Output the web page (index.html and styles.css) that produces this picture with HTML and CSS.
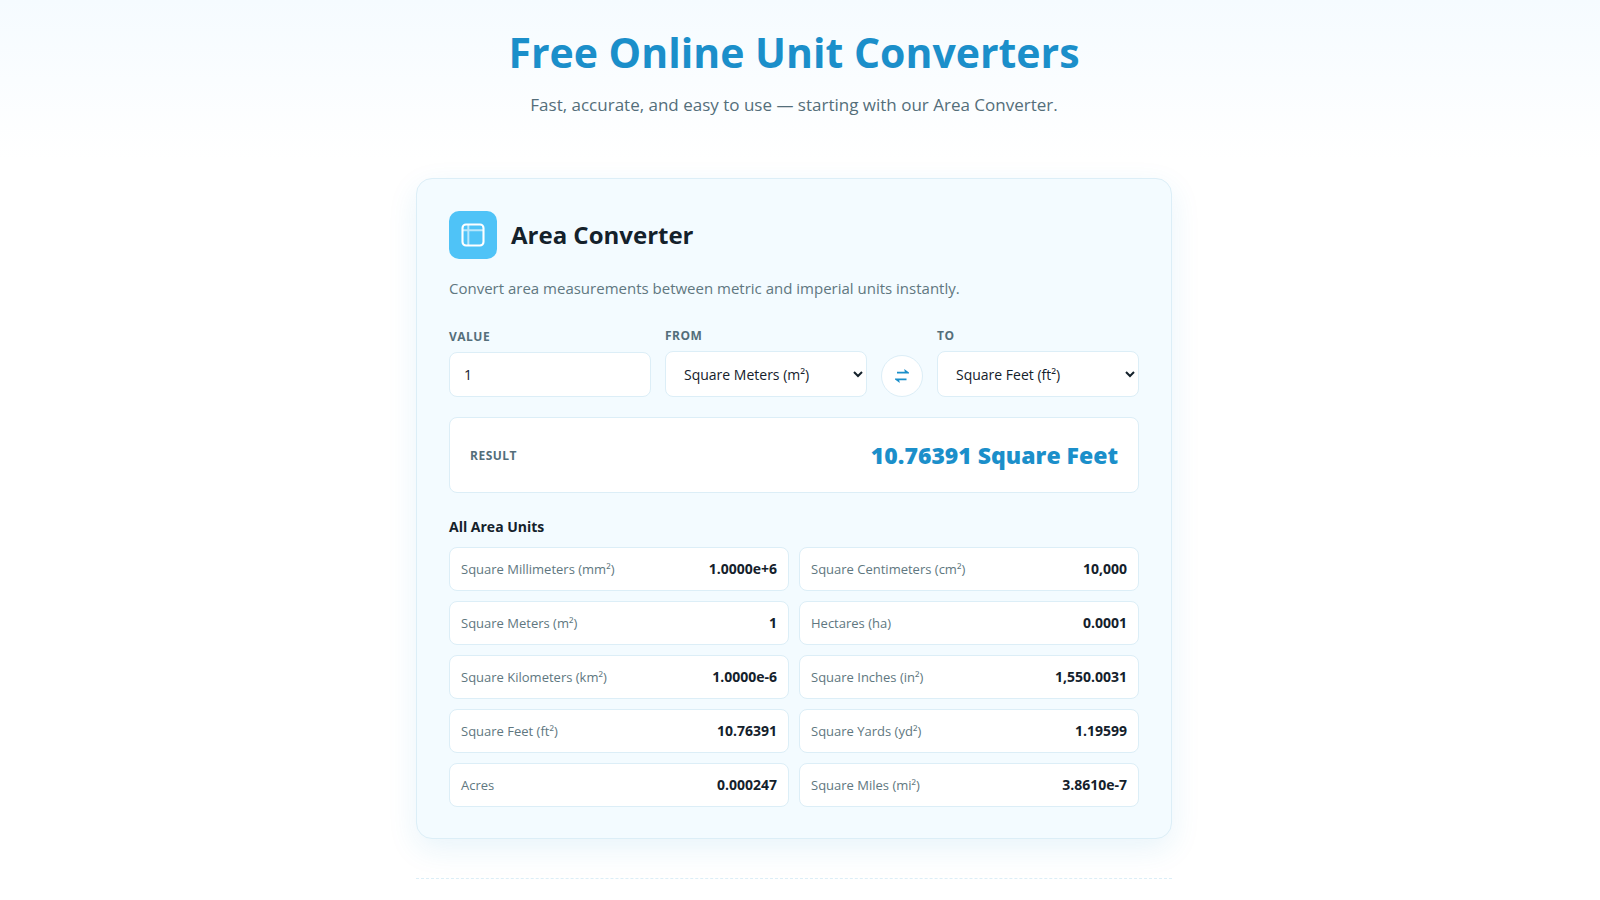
FILE: index.html
```html
<!DOCTYPE html>
<html lang="en">
<head>
<meta charset="utf-8">
<meta name="viewport" content="width=device-width, initial-scale=1">
<title>Free Online Unit Converters</title>
<link rel="stylesheet" href="styles.css">
</head>
<body>
<header class="hero">
  <h1 class="hero-title">Free Online Unit Converters</h1>
  <p class="hero-text">Fast, accurate, and easy to use — starting with our Area Converter.</p>
</header>
<main class="page">
  <section class="card">
    <div class="card-head">
      <span class="card-icon">
        <svg width="28" height="28" viewBox="0 0 24 24" fill="none" stroke="#fff" stroke-width="1.8" aria-hidden="true">
          <path d="M3 8h18M8 3v18" stroke-width="1.7" opacity=".6"/>
          <rect x="3" y="3" width="18" height="18" rx="3"/>
        </svg>
      </span>
      <h2 class="card-title">Area Converter</h2>
    </div>
    <p class="card-text">Convert area measurements between metric and imperial units instantly.</p>
    <form class="fields">
      <div class="field">
        <label class="label" for="value">Value</label>
        <input class="control control-input" id="value" type="text" inputmode="decimal" value="1">
      </div>
      <div class="field">
        <label class="label" for="from">From</label>
        <select class="control control-select" id="from"><option>Square Meters (m²)</option></select>
      </div>
      <button class="swap" type="button" aria-label="Swap units">
        <svg width="14" height="16" viewBox="0 0 14 16" fill="#1b8fca" aria-hidden="true">
          <path d="M2 3.8h7.8L9.2 1l4.8 3.4v1H2z"/>
          <path d="M11.5 12.2H4.2l.6 2.8L0 11.6v-1h11.5z"/>
        </svg>
      </button>
      <div class="field">
        <label class="label" for="to">To</label>
        <select class="control control-select" id="to"><option>Square Feet (ft²)</option></select>
      </div>
    </form>
    <div class="result">
      <span class="label">Result</span>
      <output class="result-value" for="value from to">10.76391 Square Feet</output>
    </div>
    <h3 class="list-title">All Area Units</h3>
    <dl class="units">
      <div class="unit"><dt>Square Millimeters (mm²)</dt><dd>1.0000e+6</dd></div>
      <div class="unit"><dt>Square Centimeters (cm²)</dt><dd>10,000</dd></div>
      <div class="unit"><dt>Square Meters (m²)</dt><dd>1</dd></div>
      <div class="unit"><dt>Hectares (ha)</dt><dd>0.0001</dd></div>
      <div class="unit"><dt>Square Kilometers (km²)</dt><dd>1.0000e-6</dd></div>
      <div class="unit"><dt>Square Inches (in²)</dt><dd>1,550.0031</dd></div>
      <div class="unit"><dt>Square Feet (ft²)</dt><dd>10.76391</dd></div>
      <div class="unit"><dt>Square Yards (yd²)</dt><dd>1.19599</dd></div>
      <div class="unit"><dt>Acres</dt><dd>0.000247</dd></div>
      <div class="unit"><dt>Square Miles (mi²)</dt><dd>3.8610e-7</dd></div>
    </dl>
  </section>
  <hr class="divider">
</main>
</body>
</html>
```

FILE: styles.css
```css
* {
  box-sizing: border-box;
}

body {
  margin: 0;
  background: #fff;
  color: #14212b;
  font-family: "Open Sans", "Noto Sans", sans-serif;
}

h1, h2, h3, p, dl, dd {
  margin: 0;
}

.hero {
  padding: 20px 28px 40px 16px;
  background: linear-gradient(#f5fbff, #fff);
  text-align: center;
}

.hero-title {
  color: #1b8fca;
  font-size: 41px;
  font-weight: 700;
  line-height: 64px;
}

.hero-text {
  margin-top: 6px;
  color: #546e7a;
  font-size: 17px;
  line-height: 30px;
}

.page {
  max-width: 768px;
  margin: 0 auto;
  padding: 18px 12px 16px 0;
}

.card {
  padding: 32px 32px 31px;
  border: 1px solid #dceef7;
  border-radius: 16px;
  background: #f3fbff;
  box-shadow: 0 10px 30px rgba(27, 143, 202, 0.1);
}

.card-head {
  display: flex;
  align-items: center;
  gap: 14px;
}

.card-icon {
  display: grid;
  place-items: center;
  width: 48px;
  height: 48px;
  border-radius: 10px;
  background: #4fc3f7;
}

.card-title {
  font-size: 24px;
  font-weight: 700;
  line-height: 36px;
}

.card-text {
  margin-top: 16px;
  color: #607780;
  font-size: 15px;
  line-height: 26px;
}

.fields {
  display: grid;
  grid-template-columns: 1fr 1fr 42px 1fr;
  align-items: end;
  gap: 14px;
  margin-top: 24px;
}

.field {
  display: flex;
  flex-direction: column;
  gap: 5px;
  min-width: 0;
}

.label {
  color: #546e7a;
  font-size: 12px;
  font-weight: 700;
  letter-spacing: 0.5px;
  line-height: 21px;
  text-transform: uppercase;
}

.control {
  width: 100%;
  border: 1px solid #dceef7;
  border-radius: 8px;
  background: #fff;
  color: #14212b;
  font-family: inherit;
  font-size: 14px;
}

.control-input {
  height: 45px;
  padding: 0 14px;
}

.control-select {
  height: 46px;
  padding: 0 0 0 14px;
}

.swap {
  display: grid;
  place-items: center;
  height: 42px;
  padding: 0;
  border: 1px solid #dceef7;
  border-radius: 50%;
  background: #fff;
}

.result {
  display: flex;
  align-items: center;
  justify-content: space-between;
  gap: 16px;
  margin-top: 20px;
  padding: 20px;
  border: 1px solid #dceef7;
  border-radius: 8px;
  background: #fff;
}

.result-value {
  color: #1b8fca;
  font-size: 23px;
  font-weight: 800;
  line-height: 34px;
}

.list-title {
  margin-top: 22px;
  font-size: 14px;
  font-weight: 700;
  line-height: 24px;
}

.units {
  display: grid;
  grid-template-columns: 1fr 1fr;
  gap: 10px;
  margin-top: 8px;
}

.unit {
  display: flex;
  align-items: center;
  justify-content: space-between;
  padding: 10px 11px;
  border: 1px solid #dceef7;
  border-radius: 8px;
  background: #fff;
  line-height: 22px;
}

.unit dt {
  color: #607780;
  font-size: 13px;
}

.unit dd {
  font-size: 14px;
  font-weight: 700;
}

.divider {
  margin: 39px 0 0;
  border: 0;
  border-top: 1px dashed #dceef7;
}
```
